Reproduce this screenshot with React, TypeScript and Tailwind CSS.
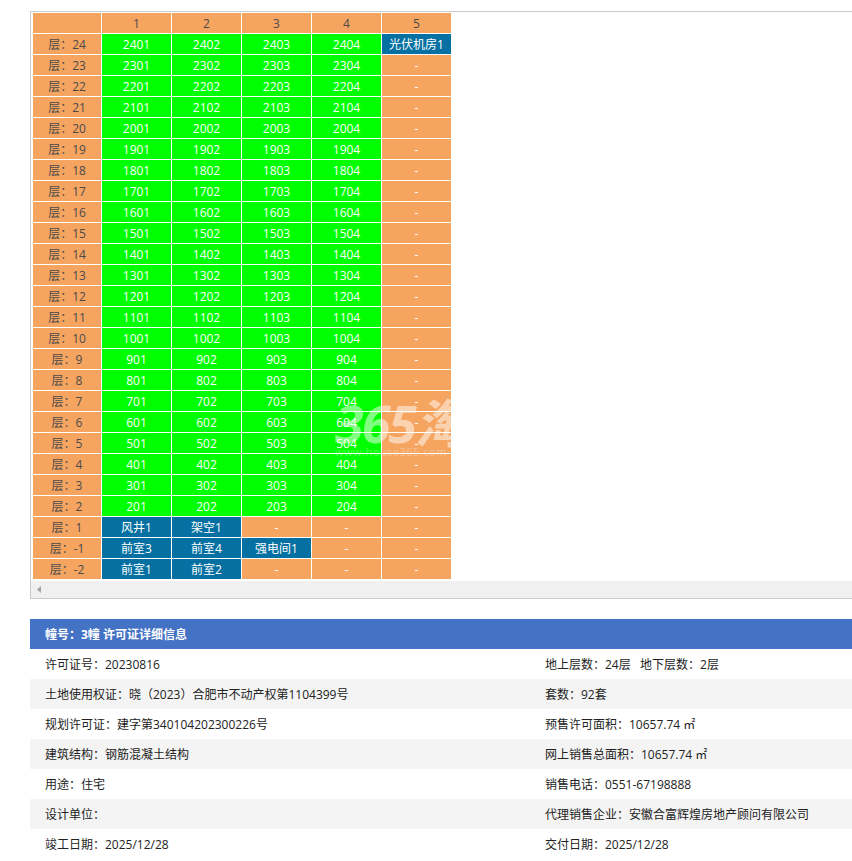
const FONT = "font-['Open_Sans','Noto_Sans_CJK_SC',sans-serif]";

type Cell = string;

const floorRows: { floor: string; cells: Cell[] }[] = [
  { floor: "24", cells: ["2401", "2402", "2403", "2404", "光伏机房1"] },
  ...[23, 22, 21, 20, 19, 18, 17, 16, 15, 14, 13, 12, 11, 10, 9, 8, 7, 6, 5, 4, 3, 2].map((n) => ({
    floor: String(n),
    cells: [1, 2, 3, 4].map((u) => `${n}0${u}`).concat("-"),
  })),
  { floor: "1", cells: ["风井1", "架空1", "-", "-", "-"] },
  { floor: "-1", cells: ["前室3", "前室4", "强电间1", "-", "-"] },
  { floor: "-2", cells: ["前室1", "前室2", "-", "-", "-"] },
];

const details: [string, string][] = [
  ["许可证号：20230816", "地上层数：24层   地下层数：2层"],
  ["土地使用权证：晓（2023）合肥市不动产权第1104399号", "套数：92套"],
  ["规划许可证：建字第340104202300226号", "预售许可面积：10657.74 ㎡"],
  ["建筑结构：钢筋混凝土结构", "网上销售总面积：10657.74 ㎡"],
  ["用途：住宅", "销售电话：0551-67198888"],
  ["设计单位：", "代理销售企业：安徽合富辉煌房地产顾问有限公司"],
  ["竣工日期：2025/12/28", "交付日期：2025/12/28"],
];

function cellColor(value: string) {
  if (value === "-") return "bg-[#f6a561]";
  if (/^\d+$/.test(value)) return "bg-[#00ff00]";
  return "bg-[#0570a1]";
}

function UnitTable() {
  return (
    <div className="ml-[30px] mt-[11px] w-[900px] border border-[#cccccc] bg-white">
      <div className="relative pl-[1px] pb-[1px]">
        <table className="table-fixed border-separate border-spacing-[1px] text-center text-xs leading-[19px]">
          <colgroup>
            <col className="w-[68px]" />
            <col className="w-[69px]" />
            <col className="w-[69px]" />
            <col className="w-[69px]" />
            <col className="w-[69px]" />
            <col className="w-[69px]" />
          </colgroup>
          <tbody>
            <tr className="h-5 text-[#4a4a4a]">
              <td className="bg-[#f6a561] p-0 pt-px"></td>
              {[1, 2, 3, 4, 5].map((n) => (
                <td key={n} className="bg-[#f6a561] p-0 pt-px">
                  {n}
                </td>
              ))}
            </tr>
            {floorRows.map((row) => (
              <tr key={row.floor} className="h-5">
                <td className="bg-[#f6a561] p-0 pt-px text-[#4a4a4a]">层：{row.floor}</td>
                {row.cells.map((c, i) => (
                  <td key={i} className={`${cellColor(c)} p-0 pt-px text-white`}>
                    {c}
                  </td>
                ))}
              </tr>
            ))}
          </tbody>
        </table>
        {/* watermark over the table, white so it disappears past the last column */}
        <div className="pointer-events-none absolute left-[304px] top-[388px] whitespace-nowrap text-white/50">
          <div className="text-[52px] font-bold italic leading-[46px] tracking-[-2px]">365淘</div>
          <div className="text-[11px] leading-3 tracking-[0.5px] text-white/30">www.house365.com</div>
        </div>
      </div>
      <div className="flex h-[17px] items-center bg-[#f0f0f0] pl-[6px]">
        <svg width="4" height="7" viewBox="0 0 4 7">
          <path d="M4 0v7L0 3.5z" fill="#a3a3a3" />
        </svg>
      </div>
    </div>
  );
}

function DetailPanel() {
  return (
    <div className="ml-[30px] mt-5 text-xs text-[#222222]">
      <div className="flex h-[30px] items-center bg-[#4472c4] pl-[15px] pt-px font-bold text-white">
        幢号：3幢 许可证详细信息
      </div>
      {details.map(([left, right], i) => (
        <div key={i} className={`flex h-[30px] items-center pt-px ${i % 2 === 1 ? "bg-[#f4f4f4]" : "bg-white"}`}>
          <div className="w-[515px] shrink-0 pl-[15px]">{left}</div>
          <div className="whitespace-pre">{right}</div>
        </div>
      ))}
    </div>
  );
}

export default function App() {
  return (
    <div className={`${FONT} h-[861px] w-[852px] overflow-hidden bg-white`}>
      <div className="flow-root">
        <UnitTable />
        <DetailPanel />
      </div>
    </div>
  );
}
